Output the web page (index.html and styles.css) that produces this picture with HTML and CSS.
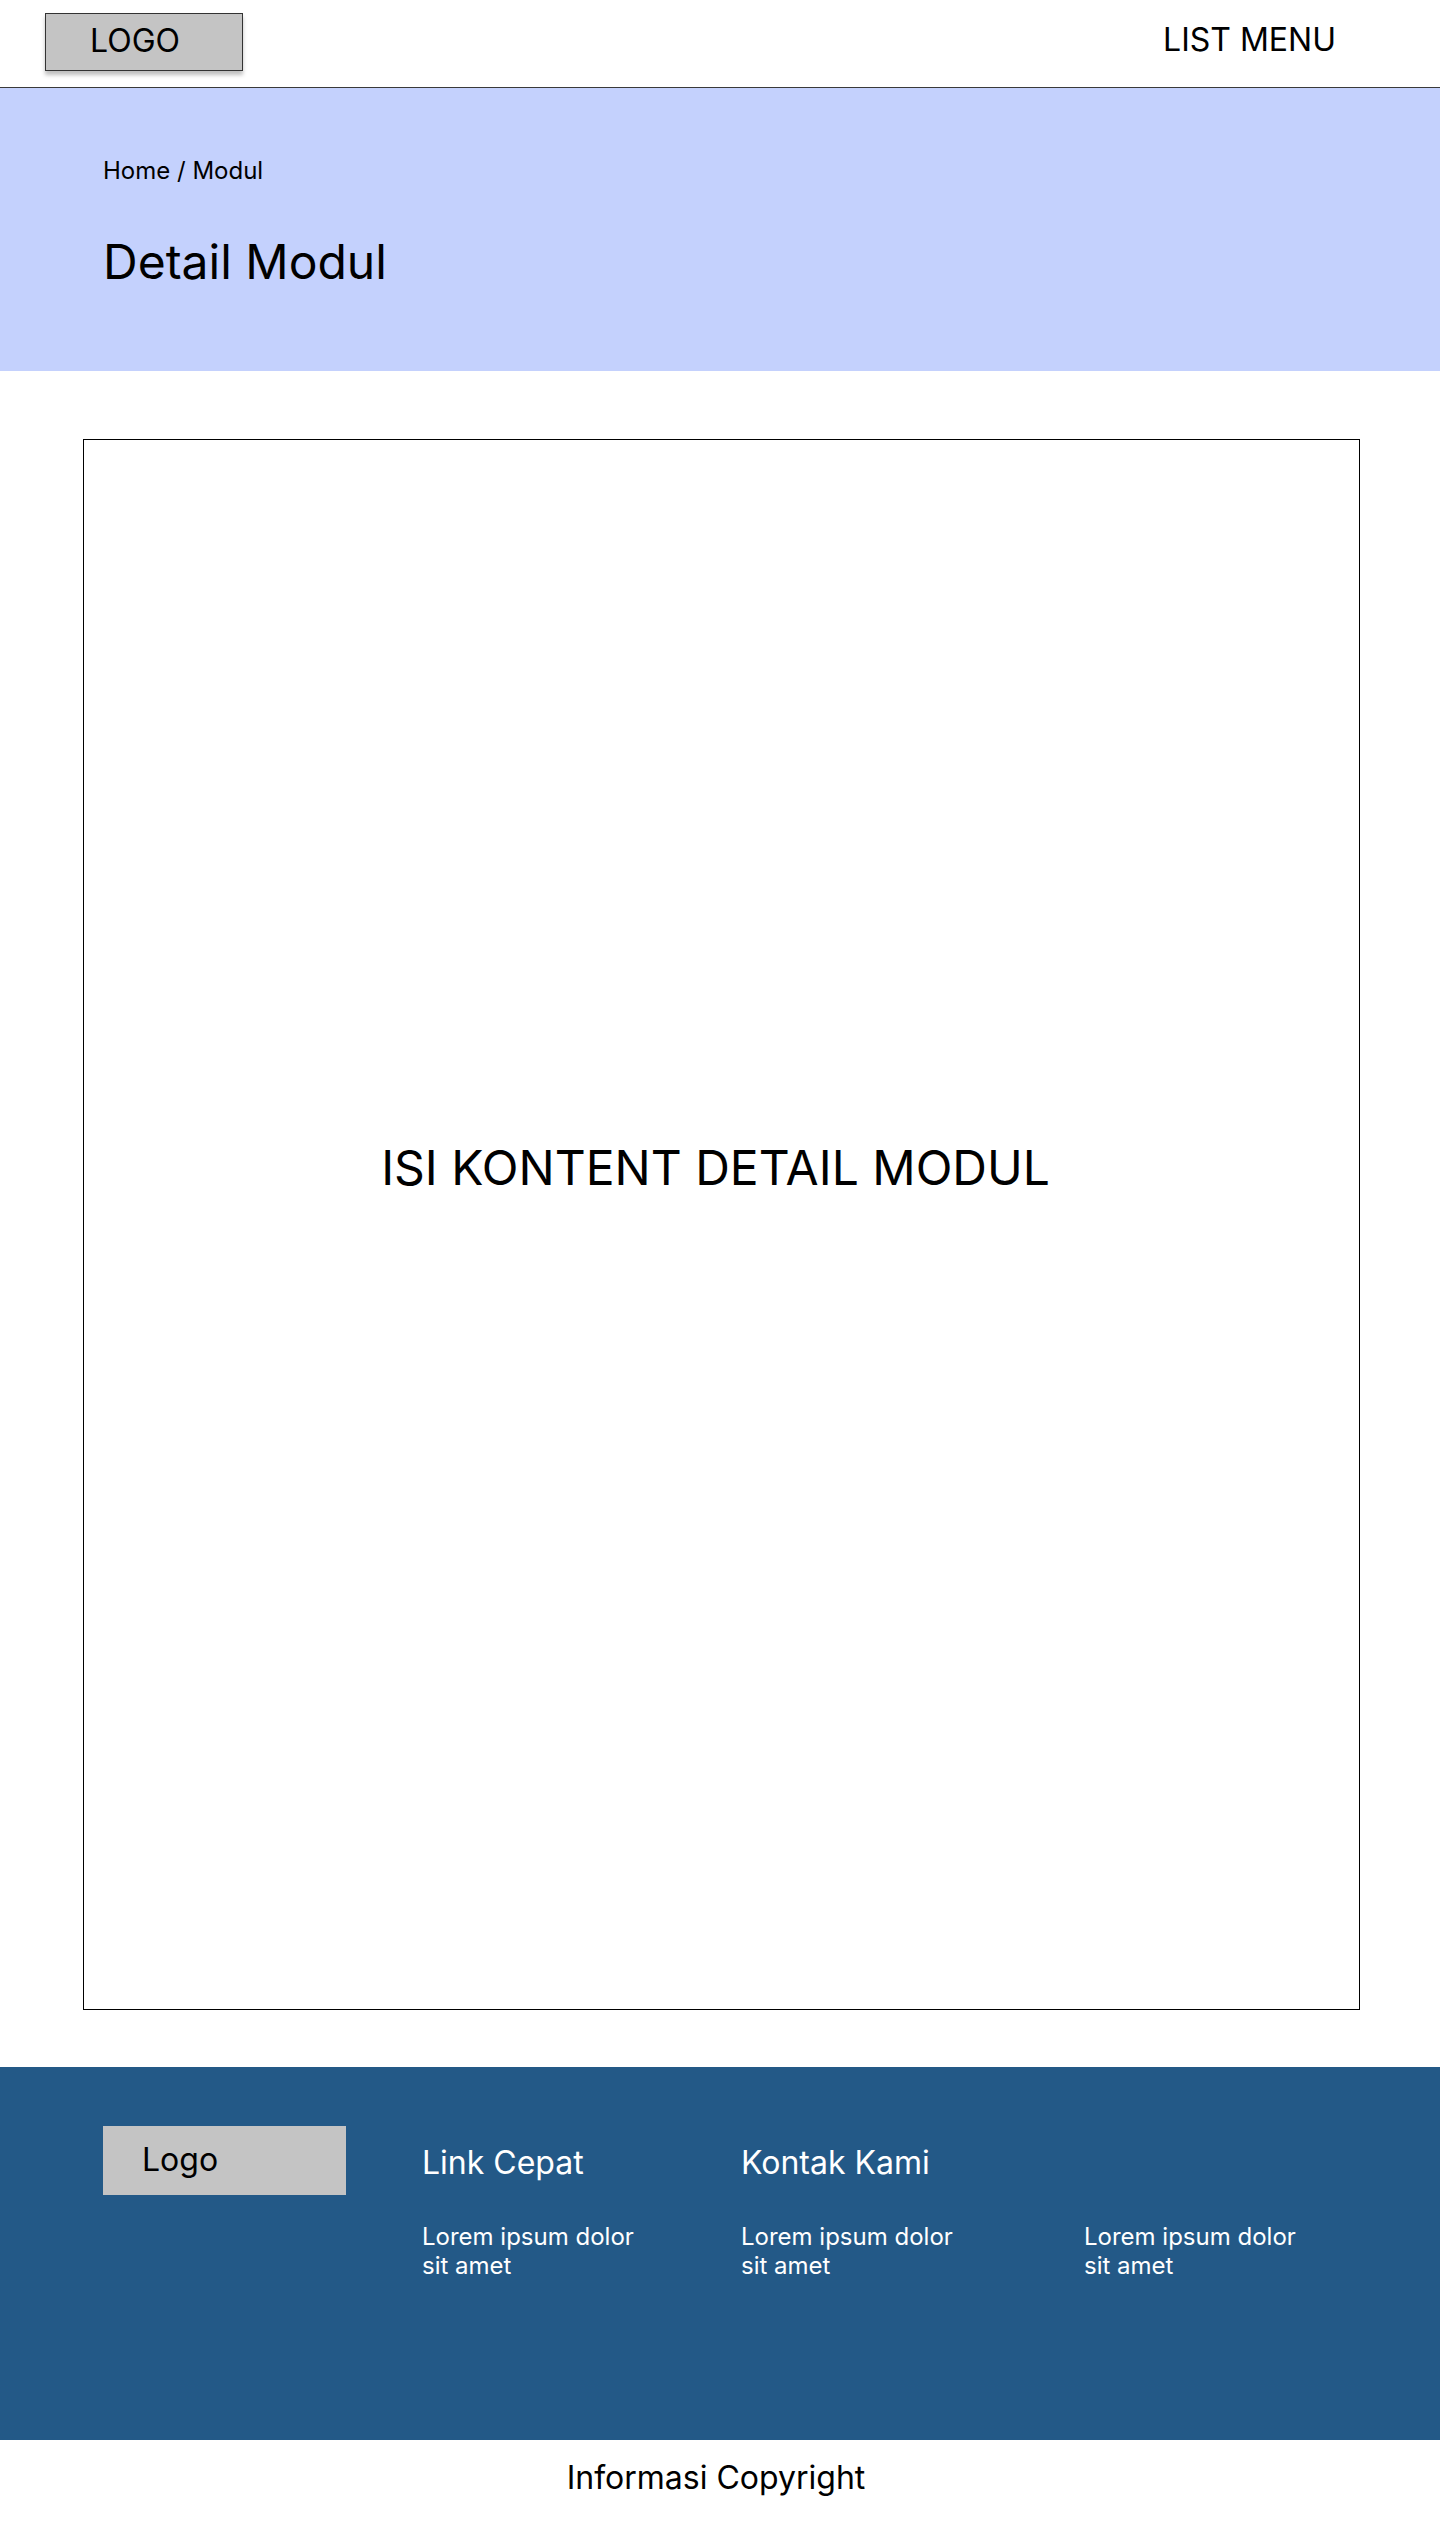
FILE: index.html
```html
<!DOCTYPE html>
<html lang="id">
<head>
<meta charset="utf-8">
<title>Detail Modul</title>
<link rel="stylesheet" href="styles.css">
</head>
<body>
<header class="topbar">
  <div class="logo-box">LOGO</div>
  <nav class="menu">LIST MENU</nav>
</header>
<section class="hero">
  <div class="crumbs">Home / Modul</div>
  <h1 class="title">Detail Modul</h1>
</section>
<main class="main">
  <div class="content-box">
    <div class="content-text">ISI KONTENT DETAIL MODUL</div>
  </div>
</main>
<footer class="footer">
  <div class="footer-grid">
    <div class="footer-logo">Logo</div>
    <div class="footer-head">Link Cepat</div>
    <div class="footer-head">Kontak Kami</div>
    <div class="footer-empty"></div>
    <div class="footer-empty"></div>
    <p class="footer-text">Lorem ipsum dolor sit amet</p>
    <p class="footer-text">Lorem ipsum dolor sit amet</p>
    <p class="footer-text">Lorem ipsum dolor sit amet</p>
  </div>
</footer>
<div class="copyright">Informasi Copyright</div>
</body>
</html>
```
FILE: styles.css
```css
* { box-sizing: border-box; }
html, body { margin: 0; padding: 0; }
body {
  font-family: Inter, "Noto Sans", "Liberation Sans", sans-serif;
  color: #000;
  background: #fff;
  width: 1440px;
}
.topbar {
  height: 88px;
  border-bottom: 1px solid #3a3a3a;
  display: flex;
  align-items: flex-start;
  justify-content: space-between;
  padding: 13px 104px 0 45px;
}
.logo-box {
  width: 198px;
  height: 58px;
  background: #c4c4c4;
  border: 1px solid #333;
  box-shadow: 0 4px 4px rgba(0,0,0,0.25);
  display: flex;
  align-items: center;
  font-size: 32px;
  padding: 0 0 4px 44px;
}
.menu {
  font-size: 32px;
  line-height: 38px;
  margin-top: 8px;
}
.hero {
  background: #c4d1fd;
  height: 283px;
  padding: 68px 0 0 103px;
}
.crumbs {
  font-size: 24px;
  line-height: 29px;
}
.title {
  margin: 48px 0 0;
  font-size: 48px;
  font-weight: 400;
  line-height: 58px;
}
.main {
  padding: 68px 80px 57px 83px;
}
.content-box {
  height: 1571px;
  border: 1px solid #000;
  padding-top: 699px;
  display: flex;
  justify-content: center;
}
.content-text {
  font-size: 48px;
  line-height: 58px;
  margin-right: 12px;
}
.footer {
  background: #235987;
  height: 373px;
  padding: 59px 0 0 103px;
  color: #fff;
}
.footer-grid {
  display: grid;
  grid-template-columns: 319px 319px 343px 300px;
  grid-template-rows: 69px auto;
  row-gap: 27px;
  align-items: center;
}
.footer-logo {
  width: 243px;
  height: 69px;
  background: #c4c4c4;
  color: #000;
  font-size: 32px;
  display: flex;
  align-items: center;
  padding: 0 0 2px 39px;
}
.footer-head {
  font-size: 32px;
  line-height: 38px;
  padding-top: 4px;
}
.footer-text {
  margin: 0;
  font-size: 24px;
  line-height: 29px;
  max-width: 230px;
  align-self: start;
}
.copyright {
  text-align: center;
  font-size: 32px;
  line-height: 38px;
  padding: 19px 8px 30px 0;
}
```
